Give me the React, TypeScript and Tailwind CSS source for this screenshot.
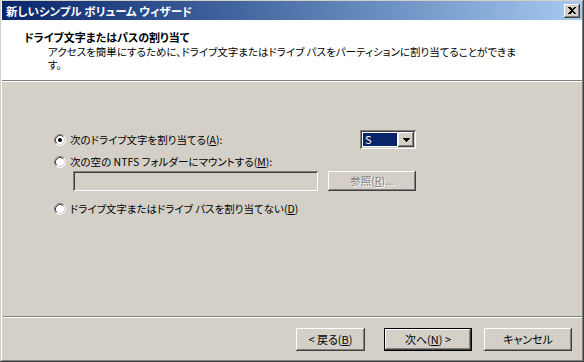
import React from 'react';

const font = "font-['Noto_Sans_CJK_JP',sans-serif] [font-feature-settings:'palt']";

const raised =
  'shadow-[inset_-1px_-1px_0_#404040,inset_1px_1px_0_#fff,inset_-2px_-2px_0_#808080,inset_2px_2px_0_#d4d0c8]';
const sunken =
  'shadow-[inset_1px_1px_0_#808080,inset_-1px_-1px_0_#fff,inset_2px_2px_0_#404040,inset_-2px_-2px_0_#d4d0c8]';

const Radio = ({ checked }: { checked?: boolean }) => (
  <svg width="12" height="12" viewBox="0 0 12 12" className="shrink-0">
    <circle cx="6" cy="6" r="5" fill="#fff" />
    <path d="M2.11 9.89A5.5 5.5 0 0 1 9.89 2.11" fill="none" stroke="#808080" />
    <path d="M9.89 2.11A5.5 5.5 0 0 1 2.11 9.89" fill="none" stroke="#fff" />
    <path d="M2.82 9.18A4.5 4.5 0 0 1 9.18 2.82" fill="none" stroke="#404040" />
    <path d="M9.18 2.82A4.5 4.5 0 0 1 2.82 9.18" fill="none" stroke="#d4d0c8" />
    {checked && <circle cx="6" cy="6" r="2" fill="#000" />}
  </svg>
);

const Btn = ({ children, w, primary }: { children: React.ReactNode; w: string; primary?: boolean }) =>
  primary ? (
    <div className={`${w} h-[23px] border border-black flex`}>
      <div className={`flex-1 flex items-center justify-center text-[11px] ${raised}`}>{children}</div>
    </div>
  ) : (
    <div className={`${w} h-[23px] flex items-center justify-center text-[11px] ${raised}`}>{children}</div>
  );

export default function App() {
  return (
    <div className={`w-[584px] h-[362px] bg-[#d4d0c8] pt-px pl-px border-r border-b border-[#404040] text-black ${font}`}>
      <div className="h-full flex flex-col border-l border-white border-r border-b border-r-[#808080] border-b-[#808080]">
        {/* title bar */}
        <div className="h-[19px] shrink-0 flex items-center pl-[4px] pr-[2px] bg-linear-to-r from-[#0a246a] to-[#a6caf0]">
          <span className="text-white font-bold text-[11.5px] leading-[14px] whitespace-nowrap">
            新しいシンプル ボリューム ウィザード
          </span>
          <div className={`ml-auto w-[16px] h-[14px] bg-[#d4d0c8] flex items-center justify-center ${raised}`}>
            <svg width="8" height="7" viewBox="0 0 8 7" shapeRendering="crispEdges">
              <path d="M0 0h2l2 2 2-2h2v1L5 3.5 8 6v1H6L4 5 2 7H0V6l3-2.5L0 1z" fill="#000" />
            </svg>
          </div>
        </div>

        {/* header */}
        <div className="h-[60px] shrink-0 bg-white pl-[22px] pt-[10px]">
          <div className="font-bold text-[11px] leading-[14px] whitespace-nowrap">ドライブ文字またはパスの割り当て</div>
          <div className="mt-px pl-[24px] text-[10.5px] leading-[13px] whitespace-nowrap">
            アクセスを簡単にするために、ドライブ文字またはドライブ パスをパーティションに割り当てることができま
            <br />
            す。
          </div>
        </div>
        <div className="h-px shrink-0 bg-[#808080]" />
        <div className="h-px shrink-0 bg-white" />

        {/* body */}
        <div className="flex-1 pl-[52px] pt-[48px] text-[10.5px]">
          <div className="w-[362px] h-[19px] flex items-center justify-between">
            <div className="flex items-center gap-[4px]">
              <Radio checked />
              <span className="leading-[13px] whitespace-nowrap">
                次のドライブ文字を割り当てる(<span className="underline">A</span>):
              </span>
            </div>
            <div className={`w-[56px] h-[19px] flex p-[2px] bg-white ${sunken}`}>
              <div className="flex-1 m-px bg-[#0a246a] text-white text-[11px] leading-[13px] pl-[2px]">S</div>
              <div className={`w-[16px] bg-[#d4d0c8] flex items-center justify-center ${raised}`}>
                <svg width="7" height="4" viewBox="0 0 7 4" shapeRendering="crispEdges">
                  <path d="M0 0h7v1H6v1H5v1H4v1H3V3H2V2H1V1H0z" fill="#000" />
                </svg>
              </div>
            </div>
          </div>

          <div className="mt-[6px] h-[13px] flex items-center gap-[4px]">
            <Radio />
            <span className="leading-[13px] whitespace-nowrap">
              次の空の NTFS フォルダーにマウントする(<span className="underline">M</span>):
            </span>
          </div>

          <div className="mt-[3px] h-[20px] flex gap-[10px] pl-[19px]">
            <div className={`w-[245px] h-[20px] bg-[#d4d0c8] ${sunken}`} />
            <div className={`w-[88px] h-[20px] flex items-center justify-center text-[#808080] [text-shadow:1px_1px_0_#fff] ${raised}`}>
              参照(<span className="underline">R</span>)...
            </div>
          </div>

          <div className="mt-[11px] h-[13px] flex items-center gap-[4px]">
            <Radio />
            <span className="leading-[13px] whitespace-nowrap">
              ドライブ文字またはドライブ パスを割り当てない(<span className="underline">D</span>)
            </span>
          </div>
        </div>

        <div className="h-px shrink-0 ml-px bg-[#808080]" />
        <div className="h-px shrink-0 ml-px bg-white" />

        {/* footer */}
        <div className="h-[42px] shrink-0 flex justify-end items-start pt-[10px] pr-[10px]">
          <Btn w="w-[69px]">
            &lt; 戻る(<span className="underline">B</span>)
          </Btn>
          <div className="ml-[19px]">
            <Btn w="w-[88px]" primary>
              次へ(<span className="underline">N</span>) &gt;
            </Btn>
          </div>
          <div className="ml-[12px]">
            <Btn w="w-[88px]">キャンセル</Btn>
          </div>
        </div>
      </div>
    </div>
  );
}
